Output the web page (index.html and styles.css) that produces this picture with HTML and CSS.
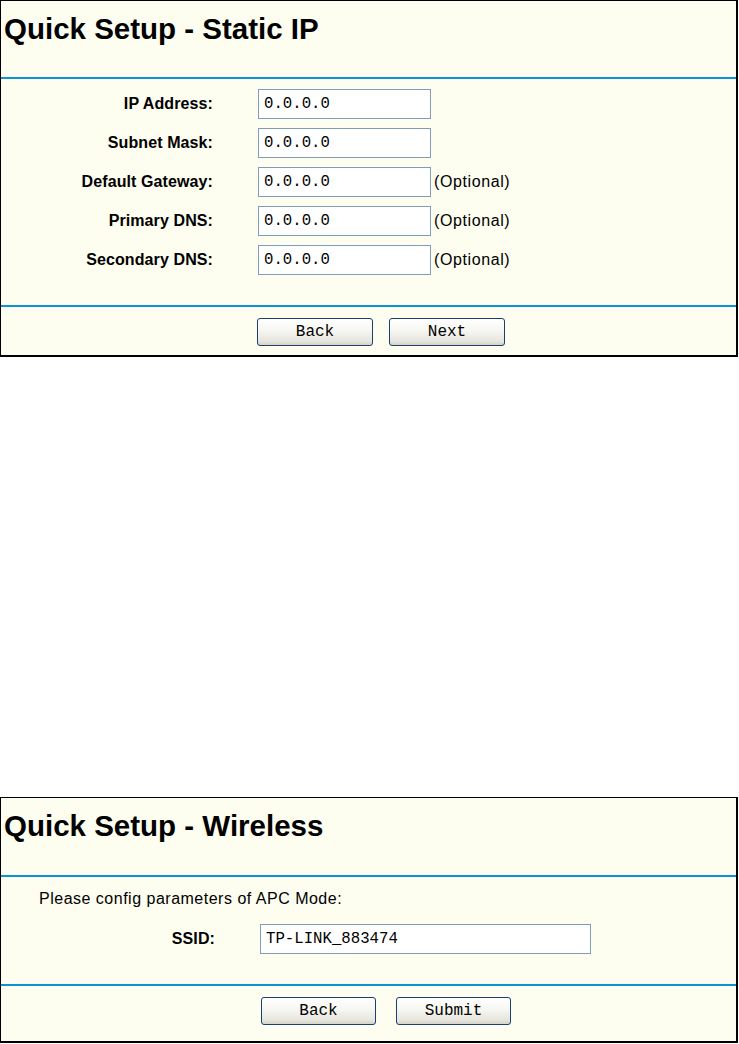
FILE: index.html
```html
<!DOCTYPE html>
<html lang="en">
<head>
<meta charset="utf-8">
<title>Quick Setup</title>
<link rel="stylesheet" href="styles.css">
</head>
<body>
<section class="panel panel-static">
  <h1 class="panel-title">Quick Setup - Static IP</h1>
  <div class="rule"></div>
  <div class="form">
    <div class="row">
      <label class="label">IP Address:</label>
      <input class="field" type="text" value="0.0.0.0">
    </div>
    <div class="row">
      <label class="label">Subnet Mask:</label>
      <input class="field" type="text" value="0.0.0.0">
    </div>
    <div class="row">
      <label class="label">Default Gateway:</label>
      <input class="field" type="text" value="0.0.0.0">
      <span class="hint">(Optional)</span>
    </div>
    <div class="row">
      <label class="label">Primary DNS:</label>
      <input class="field" type="text" value="0.0.0.0">
      <span class="hint">(Optional)</span>
    </div>
    <div class="row">
      <label class="label">Secondary DNS:</label>
      <input class="field" type="text" value="0.0.0.0">
      <span class="hint">(Optional)</span>
    </div>
  </div>
  <div class="rule"></div>
  <div class="actions">
    <button class="btn" type="button">Back</button>
    <button class="btn" type="button">Next</button>
  </div>
</section>

<section class="panel panel-wireless">
  <h1 class="panel-title">Quick Setup - Wireless</h1>
  <div class="rule"></div>
  <div class="form-wireless">
    <p class="intro">Please config parameters of APC Mode:</p>
    <div class="row">
      <label class="label label-ssid">SSID:</label>
      <input class="field field-ssid" type="text" value="TP-LINK_883474">
    </div>
  </div>
  <div class="rule"></div>
  <div class="actions actions-wireless">
    <button class="btn btn-w" type="button">Back</button>
    <button class="btn btn-w" type="button">Submit</button>
  </div>
</section>
</body>
</html>
```
FILE: styles.css
```css
* {
  box-sizing: border-box;
}

html, body {
  margin: 0;
  padding: 0;
  background: #ffffff;
}

body {
  font-family: "Liberation Sans", Arial, sans-serif;
  color: #000;
  width: 739px;
}

.panel {
  width: 738px;
  background: #fdfdf0;
  border-style: solid;
  border-color: #000;
  border-width: 1px 2px 2px 1px;
  display: flex;
  flex-direction: column;
}

.panel-wireless {
  margin-top: 440px;
}

.panel-title {
  margin: 0;
  height: 76px;
  padding: 11px 0 0 3px;
  font-size: 29.5px;
  line-height: 34px;
  font-weight: bold;
}

.panel-wireless .panel-title {
  height: 77px;
}

.rule {
  height: 2px;
  background: #0c93d3;
}

.form {
  padding: 10px 0 30px 0;
  display: flex;
  flex-direction: column;
  gap: 9px;
}

.row {
  display: flex;
  align-items: center;
  height: 30px;
}

.label {
  width: 212px;
  margin-right: 45px;
  text-align: right;
  font-weight: bold;
  font-size: 16px;
  letter-spacing: 0.1px;
}

.field {
  width: 173px;
  height: 30px;
  margin: 0;
  border: 1px solid #7f9db9;
  background: #fff;
  padding: 0 0 0 5px;
  font-family: "Liberation Mono", "Courier New", monospace;
  font-size: 15.7px;
  color: #000;
  outline: none;
}

.hint {
  margin-left: 3px;
  font-size: 16px;
  letter-spacing: 0.6px;
}

.form-wireless {
  height: 107px;
  padding-top: 12px;
}

.intro {
  margin: 0 0 15px 0;
  padding-left: 38px;
  font-size: 16px;
  line-height: 20px;
  letter-spacing: 0.5px;
}

.label-ssid {
  width: 214px;
  margin-right: 45px;
}

.field-ssid {
  width: 331px;
}

.actions {
  display: flex;
  gap: 16px;
  padding: 11px 0 9px 256px;
}

.actions-wireless {
  gap: 20px;
  padding: 11px 0 16px 260px;
}

.btn {
  width: 116px;
  height: 28px;
  margin: 0;
  padding: 0;
  border: 1px solid #1c3f70;
  border-radius: 3px;
  background: linear-gradient(#ffffff 0%, #f6f6f2 45%, #e6e5de 85%, #d6d4c8 100%);
  font-family: "Liberation Mono", "Courier New", monospace;
  font-size: 16px;
  color: #000;
}

.btn-w {
  width: 115px;
}
```
